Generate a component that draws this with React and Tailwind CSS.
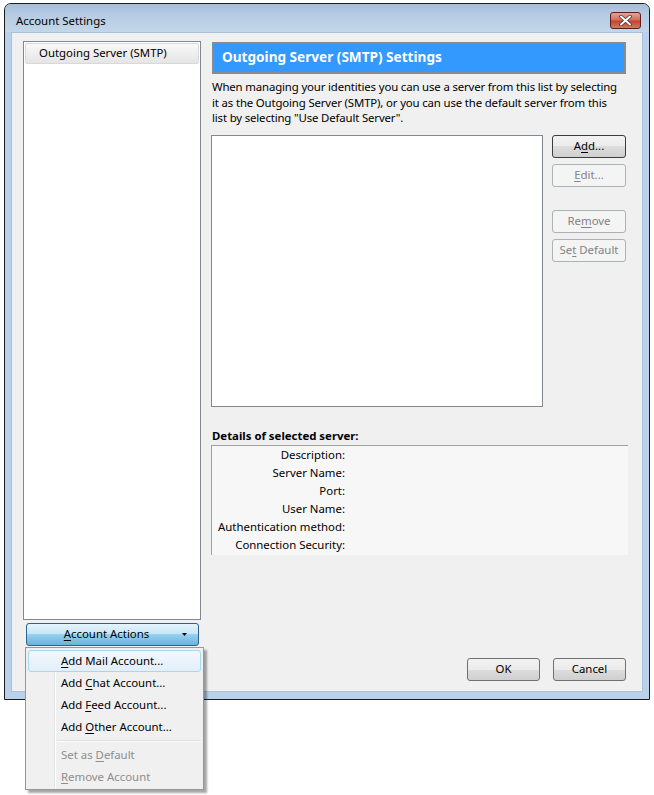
import React from "react";

const font = "font-['Noto_Sans',sans-serif]";

// Win7 style push button
function Btn({ children, width = "w-[74px]", disabled, isDefault }) {
  const border = disabled
    ? "border-[#adb2b5] text-[#838383] bg-[#f4f4f4]"
    : isDefault
    ? "border-[#3c3c3c] text-black bg-[linear-gradient(#f2f2f2_0%,#ebebeb_50%,#dddddd_50%,#cfcfcf_100%)]"
    : "border-[#707070] text-black bg-[linear-gradient(#f2f2f2_0%,#ebebeb_50%,#dddddd_50%,#cfcfcf_100%)]";
  return (
    <div className={`${width} h-[23px] rounded-[3px] border flex items-center justify-center pb-[1px] ${border}`}>
      <span className="whitespace-pre">{children}</span>
    </div>
  );
}

const U = ({ children }) => <span className="underline underline-offset-2">{children}</span>;

function CloseButton() {
  return (
    <div className="w-[31px] h-[17px] rounded-[3px] border border-[#5a2020] bg-[linear-gradient(#e8a493_0%,#d0705c_45%,#c4442c_55%,#d27a5e_100%)] flex items-center justify-center">
      <svg width="13" height="11" viewBox="0 0 13 11">
        <path d="M2 1.5 L11 9.5 M11 1.5 L2 9.5" stroke="#4a3030" strokeWidth="3.6" strokeLinecap="round" />
        <path d="M2 1.5 L11 9.5 M11 1.5 L2 9.5" stroke="#ffffff" strokeWidth="2" strokeLinecap="round" />
      </svg>
    </div>
  );
}

export default function App() {
  const details = [
    "Description:",
    "Server Name:",
    "Port:",
    "User Name:",
    "Authentication method:",
    "Connection Security:",
  ];

  return (
    <div className={`relative w-[654px] h-[795px] bg-white pl-[4px] pt-[3px] text-[11.4px] ${font}`}>
      {/* Window */}
      <div className="w-[646px] h-[697px] border border-[#1c1c1c] rounded-t-[7px] bg-[#b9d1ea] flex flex-col">
        {/* Title bar */}
        <div className="h-[28px] rounded-t-[6px] bg-[linear-gradient(#a7bed8_0%,#b6cce3_40%,#c3d6ea_100%)] flex items-start justify-between pl-[11px] pr-[8px]">
          <div className="pt-[8px] text-black">Account Settings</div>
          <div className="mt-[8px]">
            <CloseButton />
          </div>
        </div>

        {/* Client area */}
        <div className="mx-[6px] h-[660px] bg-[#f0f0f0] border border-[#a9c2dc] flex pl-[11px] pt-[8px] text-black">
          {/* Left column */}
          <div className="w-[178px] flex flex-col">
            <div className="h-[579px] bg-white border border-[#828790] p-[1px]">
              <div className="h-[21px] rounded-[2px] border border-[#d9d9d9] bg-[linear-gradient(#f8f8f8,#e5e5e5)] flex items-center pl-[13px] pb-[1px]">
                Outgoing Server (SMTP)
              </div>
            </div>
            <div className="mt-[3px] ml-[3px] w-[173px] h-[23px] rounded-[3px] border border-[#2c628b] bg-[linear-gradient(#e5f4fc_0%,#c4e5f6_50%,#98d1ef_50%,#68b3db_100%)] flex items-center pb-[1px] relative">
              <div className="flex-1 text-center pr-[12px]">
                <U>A</U>ccount Actions
              </div>
              <svg className="absolute right-[11px] top-[9px]" width="5" height="3" viewBox="0 0 5 3">
                <path d="M0 0 H5 L2.5 3 Z" fill="#000" />
              </svg>
            </div>
          </div>

          {/* Right column */}
          <div className="ml-[10px] w-[416px] flex flex-col">
            <div className="ml-[1px] mt-[1px] w-[414px] h-[32px] bg-[#3399ff] border-2 border-[#8a8a8a] flex items-center pl-[8px] pb-[1px] text-white font-bold text-[13.6px]">
              Outgoing Server (SMTP) Settings
            </div>
            <p className="mt-[5px] ml-[1px] w-[410px] leading-[15.5px] h-[49px] tracking-[-0.15px]">
              When managing your identities you can use a server from this list by selecting it as the Outgoing Server (SMTP), or you can use the default server from this list by selecting "Use Default Server".
            </p>

            <div className="mt-[7px] flex">
              <div className="w-[332px] h-[272px] bg-white border border-[#828790]" />
              <div className="ml-[9px] flex flex-col">
                <Btn isDefault>A<U>d</U>d...</Btn>
                <div className="mt-[6px]">
                  <Btn disabled><U>E</U>dit...</Btn>
                </div>
                <div className="mt-[23px]">
                  <Btn disabled>Re<U>m</U>ove</Btn>
                </div>
                <div className="mt-[6px]">
                  <Btn disabled>Se<U>t</U> Default</Btn>
                </div>
              </div>
            </div>

            <div className="mt-[20px] ml-[1px] font-bold h-[18px]">Details of selected server:</div>
            <div className="w-[417px] h-[110px] bg-[#f7f7f7] border-l border-t border-[#a0a0a0]">
              {details.map((label) => (
                <div key={label} className="h-[18px] flex items-center">
                  <div className="w-[133px] text-right whitespace-nowrap">{label}</div>
                </div>
              ))}
            </div>

            <div className="mt-[103px] flex justify-end gap-[13px] pr-[1px]">
              <Btn width="w-[73px]">OK</Btn>
              <Btn width="w-[73px]">Cancel</Btn>
            </div>
          </div>
        </div>
      </div>

      {/* Account Actions dropdown menu */}
      <div className="absolute left-[25px] top-[647px] w-[179px] h-[143px] bg-[#f0f0f0] border border-[#979797] shadow-[3px_3px_2px_rgba(0,0,0,0.35)] py-[2px]">
        <div className="absolute left-[28px] top-[1px] bottom-[1px] w-[2px] border-l border-[#e2e3e3] border-r border-r-white" />
        {[
          [<><U>A</U>dd Mail Account...</>, true],
          [<>Add <U>C</U>hat Account...</>],
          [<>Add <U>F</U>eed Account...</>],
          [<>Add <U>O</U>ther Account...</>],
        ].map(([label, hot], i) => (
          <div
            key={i}
            className={`relative h-[22px] mx-[2px] flex items-center pl-[32px] pb-[1px] text-black rounded-[3px] ${
              hot ? "border border-[#a8d8eb] bg-[linear-gradient(#f2f7fc,#e3eefa)]" : "border border-transparent"
            }`}
          >
            <span className="whitespace-pre">{label}</span>
          </div>
        ))}
        <div className="h-[6px] flex items-center pl-[31px] pr-[2px]">
          <div className="w-full h-[2px] border-t border-[#e0e0e0] border-b border-b-white" />
        </div>
        <div className="h-[22px] mx-[2px] flex items-center pl-[33px] pb-[1px] text-[#8d8d8d]">
          <span className="whitespace-pre">Set as <U>D</U>efault</span>
        </div>
        <div className="h-[22px] mx-[2px] flex items-center pl-[33px] pb-[1px] text-[#8d8d8d]">
          <span className="whitespace-pre"><U>R</U>emove Account</span>
        </div>
      </div>
    </div>
  );
}
